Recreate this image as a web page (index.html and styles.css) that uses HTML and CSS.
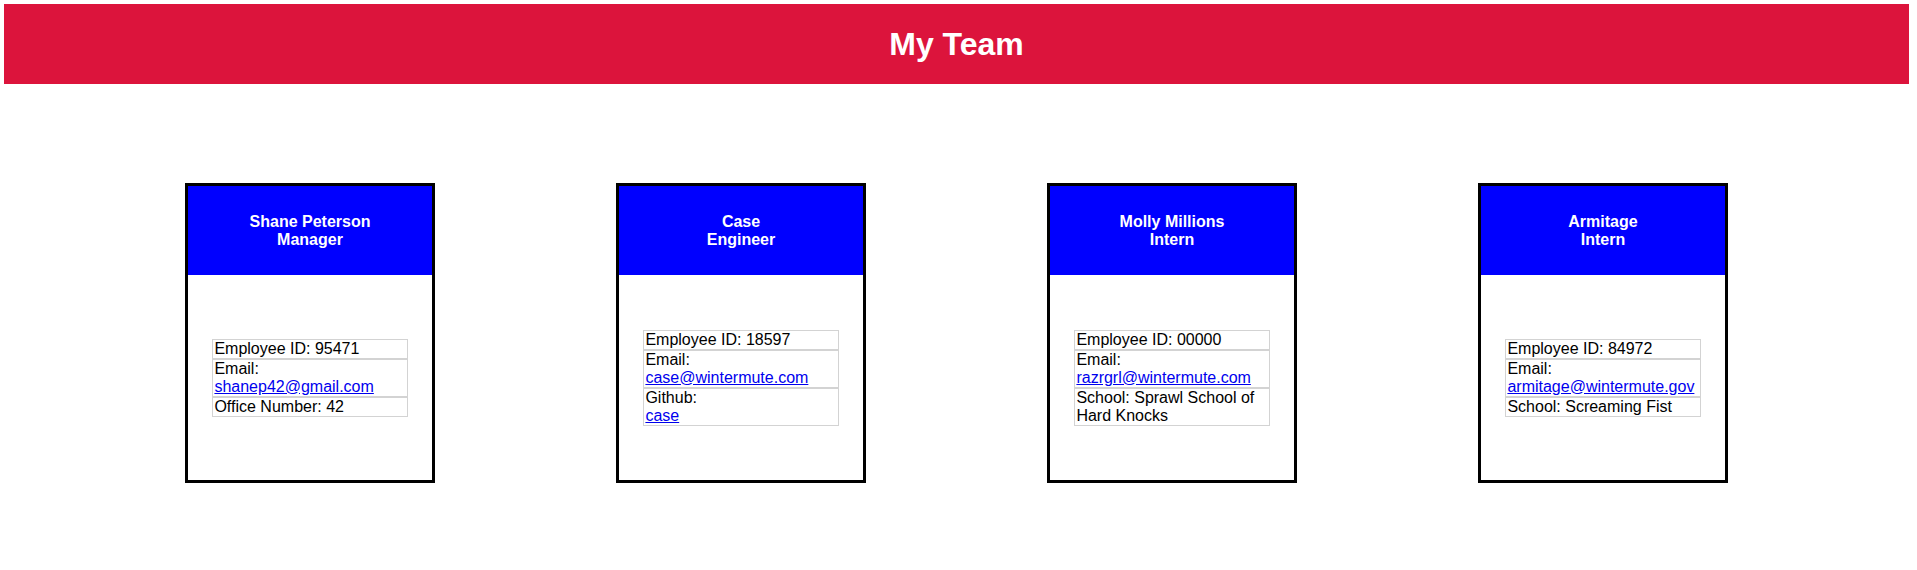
FILE: index.html
```html
<!DOCTYPE html>
<html lang="en">
<head>
<meta charset="utf-8">
<title>My Team</title>
<link rel="stylesheet" href="styles.css">
</head>
<body>
  <header class="banner">
    <h1 class="banner-title">My Team</h1>
  </header>
  <main class="team">
    <section class="card">
      <div class="card-head">Shane Peterson<br>Manager</div>
      <div class="card-body">
        <table class="info">
          <tr><td>Employee ID: 95471</td></tr>
          <tr><td>Email:<br><a href="#">shanep42@gmail.com</a></td></tr>
          <tr><td>Office Number: 42</td></tr>
        </table>
      </div>
    </section>
    <section class="card">
      <div class="card-head">Case<br>Engineer</div>
      <div class="card-body">
        <table class="info">
          <tr><td>Employee ID: 18597</td></tr>
          <tr><td>Email:<br><a href="#">case@wintermute.com</a></td></tr>
          <tr><td>Github:<br><a href="#">case</a></td></tr>
        </table>
      </div>
    </section>
    <section class="card">
      <div class="card-head">Molly Millions<br>Intern</div>
      <div class="card-body">
        <table class="info">
          <tr><td>Employee ID: 00000</td></tr>
          <tr><td>Email:<br><a href="#">razrgrl@wintermute.com</a></td></tr>
          <tr><td>School: Sprawl School of Hard Knocks</td></tr>
        </table>
      </div>
    </section>
    <section class="card">
      <div class="card-head">Armitage<br>Intern</div>
      <div class="card-body">
        <table class="info">
          <tr><td>Employee ID: 84972</td></tr>
          <tr><td>Email:<br><a href="#">armitage@wintermute.gov</a></td></tr>
          <tr><td>School: Screaming Fist</td></tr>
        </table>
      </div>
    </section>
  </main>
</body>
</html>
```

FILE: styles.css
```css
* {
  box-sizing: border-box;
}

body {
  margin: 0;
  padding: 4px 8px 0 4px;
  font-family: "Liberation Sans", Arial, sans-serif;
  background: #ffffff;
  color: #000000;
}

.banner {
  height: 80px;
  background: #dc143c;
  display: flex;
  align-items: center;
  justify-content: center;
}

.banner-title {
  margin: 0;
  color: #ffffff;
  font-size: 32px;
  font-weight: bold;
  line-height: 37px;
}

.team {
  display: flex;
  justify-content: space-evenly;
  margin-top: 99px;
}

.card {
  width: 250px;
  height: 300px;
  border: 3px solid #000000;
  display: flex;
  flex-direction: column;
}

.card-head {
  height: 89px;
  flex: none;
  background: #0000ff;
  color: #ffffff;
  font-weight: bold;
  font-size: 16px;
  line-height: 18px;
  text-align: center;
  display: flex;
  align-items: center;
  justify-content: center;
}

.card-body {
  flex: 1;
  display: flex;
  align-items: center;
  justify-content: center;
}

.info {
  width: 80%;
  border-collapse: separate;
  border-spacing: 0;
  font-size: 16px;
  line-height: 18px;
}

.info td {
  border: 1px solid #d3d3d3;
  padding: 0 1px;
}

.info a {
  color: #0000ee;
}
```
